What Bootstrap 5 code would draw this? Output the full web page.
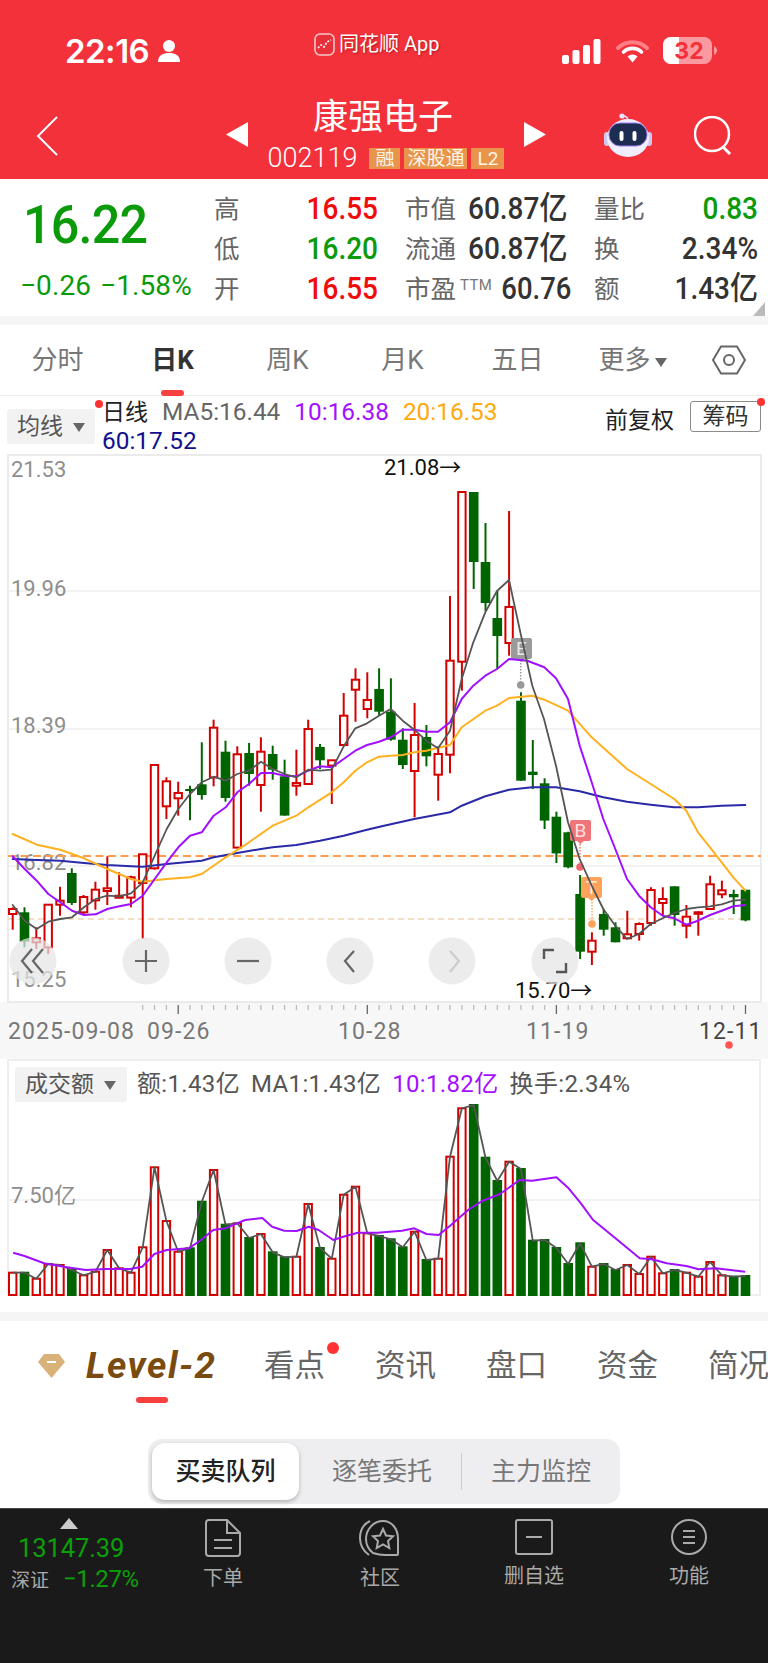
<!DOCTYPE html>
<html lang="zh">
<head>
<meta charset="utf-8">
<title>康强电子</title>
<link href="https://cdn.jsdelivr.net/npm/bootstrap@5.3.0/dist/css/bootstrap.min.css" rel="stylesheet">
<style>
html,body{margin:0;background:#fff}
body{font-family:Roboto,"Noto Sans CJK SC",sans-serif;color:#333}
.app{width:768px;height:1663px;overflow:hidden}
.head{background:#f3313b;height:179px;color:#fff}
.sbar{height:102px;padding-left:65px}
.sb-left{width:249px}
.sb-mid{width:248px;font-size:20px;color:#fff;text-shadow:1px 1px 2px rgba(120,0,0,.5);padding-bottom:14px}
.clock{font-family:Inter,Roboto,sans-serif;font-weight:600;font-size:33px;line-height:36px;letter-spacing:-.5px}
.gap-w{margin-left:15px}
.gap-b{margin-left:14px}
.qnav{height:77px;padding-left:36px}
.backcell{width:190px;margin-top:14px}
.tri-cell{margin-top:20px;width:22px}
.qcenter{width:256px;margin:0 10px;text-align:center;margin-top:-5px}
.qtitle{font-size:35px;line-height:42px;font-weight:400;padding-right:6px}
.qcode{height:23px;margin-top:8px;padding-left:4px}
.qnum{font-size:27px;line-height:23px;font-weight:300;margin-right:12px}
.qtag{background:#e8954b;color:#fff6e8;font-size:19px;line-height:21px;height:21px;padding:0 6px;margin-right:4px}
.qtag.tight{padding:0 3px}
.robot{margin-left:58px;margin-top:11px}
.srch{margin-left:42px;margin-top:14px}
.stats{height:137px;display:grid;grid-template-columns:214px 164px 192px 188px;grid-template-rows:40px 40px 40px;padding-top:10px}
.pricebox{grid-row:1 / span 3}
.bigp{color:#0a9a0a;font-size:54px;font-weight:500;line-height:60px;padding-left:23px;margin-top:6px;width:max-content;transform:scaleX(.93);transform-origin:23px 0;letter-spacing:-.8px}
.subp{color:#0a9a0a;font-size:28px;line-height:32px;padding-left:20px;margin-top:15px;white-space:nowrap;font-weight:400;letter-spacing:.1px}
.subp span{margin-left:9px}
.cell{display:flex;align-items:center;justify-content:space-between;font-size:28px;line-height:40px;white-space:nowrap}
.cell3{padding-left:27px;justify-content:flex-start}
.cell4{padding-left:24px}
.lab{font-size:25.5px;color:#666}
.num{display:inline-block;transform:scaleY(1.14);font-weight:500}
.v-r{color:#ee0c0c}.v-g{color:#0a9a0a}.v-k{color:#333}
.cell3 .v-k{margin-left:12px}
.ttm{font-size:15px;color:#777;margin:-8px 9px 0 4px;letter-spacing:.4px}
.cell3 .ttmv{margin-left:0;font-size:27.5px}
.corner{width:0;height:0;border-style:solid;border-width:0 0 14px 12px;border-color:transparent transparent #bbb transparent;position:absolute;right:3px;bottom:0}
.statwrap{position:relative}
.band{height:9px;background:#f5f5f5}
.ptabs{height:71px;display:grid;grid-template-columns:repeat(6,115px) 78px;border-bottom:1px solid #eee;align-items:center;font-size:26px;color:#777;text-align:center}
.ptab{position:relative}
.ptab.on{color:#333;font-weight:700}
.ptab.on::after{content:"";position:absolute;left:46px;bottom:-16px;width:23px;height:6px;border-radius:3px;background:#f8403f}
.maro{height:58px;padding:0 7px}
.mabtn{width:88px;height:35px;background:#f2f2f2;border-radius:3px;margin-top:13px;font-size:23px;line-height:35px;color:#555;padding-left:10px;position:relative;flex:none}
.caret{display:inline-block;width:0;height:0;border-left:6px solid transparent;border-right:6px solid transparent;border-top:9px solid #666;margin-left:10px;vertical-align:2px}
.reddot{position:absolute;background:#f33;border-radius:50%;width:8px;height:8px}
.matxt{margin-left:7px;font-size:24.4px;line-height:28px;margin-top:2px;color:#666;flex:1;white-space:nowrap}
.matxt span{margin-right:14px}
.matxt .c-k{font-size:23px}
.c-k{color:#222}.c-p{color:#a50fff}.c-o{color:#ffa90f}.c-b{color:#10108f}
.qf{font-size:23px;color:#222;margin-top:8px;margin-right:16px;white-space:nowrap}
.chip{width:71px;height:31px;border:1px solid #8a8a8a;border-radius:3px;font-size:23px;line-height:29px;text-align:center;color:#333;margin-top:5px;position:relative}
svg text{font-family:Roboto,"Noto Sans CJK SC",sans-serif}
.svgblock{display:block}
.vhead{height:35px;margin-top:6px}
.volbox{margin:0 7px;height:237px;border:2px solid #eee;position:relative;padding-left:6px}
.volbox .vg{position:absolute;left:-2px;top:42px}
.vbtn{width:112px;height:35px;background:#f2f2f2;border-radius:3px;font-size:23px;line-height:35px;color:#555;padding-left:10px;flex:none}
.vtxt{font-size:24px;color:#555;white-space:nowrap;margin-left:10px;line-height:35px;letter-spacing:.35px}
.vtxt span{margin-right:11px}
.pgap{height:16px}
.dtabs{height:95px;padding-left:38px;position:relative}
.lvl{font-family:Roboto,sans-serif;font-style:italic;font-weight:700;font-size:37px;color:#7a4b10;margin-left:21px;width:178px;position:relative;line-height:44px;flex:none;letter-spacing:1.5px}
.lvl::after{content:"";position:absolute;left:50px;bottom:-15px;width:32px;height:6px;border-radius:3px;background:#f8403f}
.dt{font-size:30.5px;color:#666;margin-right:50px;line-height:44px;position:relative;white-space:nowrap;flex:none}
.dt i{position:absolute;right:-14px;top:-2px;width:12px;height:12px;border-radius:50%;background:#f33}
.dtrow{height:44px;margin-top:23px;width:800px}
.segwrap{height:69px;padding-left:148px}
.seg{width:472px;height:65px;background:#eeeef0;border-radius:14px;padding:4px}
.sg{width:162px;flex:none;font-size:25px;color:#777;text-align:center;padding-left:4px}
.sg.on{width:147px;padding-left:0;background:#fff;color:#222;border-radius:13px;box-shadow:0 2px 4px rgba(0,0,0,.25);font-weight:500}
.sg.last{width:158px;padding-left:0}
.sgd{width:1px;height:37px;background:#ccc;flex:none}
.botbar{background:#1a1a1a;height:155px;position:relative;border-top:1px solid #444;color:#aaa}
.idx{width:175px;padding-top:9px;position:relative}
.idxup{width:0;height:0;border-left:9px solid transparent;border-right:9px solid transparent;border-bottom:11px solid #ccc;margin-left:60px}
.idxv{color:#0aa00a;font-size:25.5px;line-height:30px;padding-left:18px;margin-top:4px;letter-spacing:-.1px}
.idxl{font-size:19px;line-height:26px;padding-left:11px;margin-top:3px;color:#aaa;white-space:nowrap}
.idxl b{font-weight:400;font-size:24px;color:#0aa00a;margin-left:14px;letter-spacing:-.4px}
.bi{position:absolute;top:10px;text-align:center;font-size:20px;line-height:26px;color:#aaa}
.bi svg{display:block;margin:0 auto 8px}
</style>
</head>
<body>
<div class="app">
 <header class="head">
  <div class="sbar d-flex align-items-center">
   <div class="sb-left d-flex align-items-center">
    <span class="clock">22:16</span>
    <svg class="ms-2" width="24" height="24" viewBox="0 0 24 24"><circle cx="12" cy="7" r="6" fill="#fff"/><path d="M1 23c0-7 5-9 11-9s11 2 11 9z" fill="#fff"/></svg>
   </div>
   <div class="sb-mid d-flex align-items-center">
    <svg width="21" height="23" viewBox="0 0 21 23"><rect x="1" y="1" width="19" height="21" rx="5" fill="#e8303a" stroke="#f8c8c8" stroke-width="1.6"/><path d="M4 15l3-3 3 2 3-5 4-2" fill="none" stroke="#fff" stroke-width="1.6" stroke-dasharray="2 1.5"/></svg>
    <span class="ms-1">同花顺 App</span>
   </div>
   <div class="d-flex align-items-center">
    <svg width="39" height="25" viewBox="0 0 39 25"><rect x="0" y="16" width="7" height="9" rx="2" fill="#fff"/><rect x="10.500" y="11" width="7" height="14" rx="2" fill="#fff"/><rect x="21" y="6" width="7" height="19" rx="2" fill="#fff"/><rect x="31.500" y="0" width="7" height="25" rx="2" fill="#fff"/></svg>
    <svg class="gap-w" width="33" height="25" viewBox="0 0 33 25"><path d="M2 9a21 21 0 0 1 29 0" fill="none" stroke="#ff7f85" stroke-width="4" stroke-linecap="round"/><path d="M7.500 13a13 13 0 0 1 18 0" fill="none" stroke="#fff" stroke-width="3.600" stroke-linecap="round"/><path d="M11.500 17.500a7.500 7.500 0 0 1 10 0l-5 6z" fill="#fff"/></svg>
    <svg class="gap-b" width="55" height="28" viewBox="0 0 55 28"><rect x="0" y="0" width="49" height="27" rx="8" fill="#fa9aa0"/><path d="M8 0h8v27h-8a8 8 0 0 1-8-8v-11a8 8 0 0 1 8-8z" fill="#fff"/><path d="M51 9c2 1 3 3 3 4.500s-1 3.500-3 4.500z" fill="#fa9aa0"/><text x="26" y="21.500" text-anchor="middle" font-size="23" font-weight="700" fill="#f3313b" style="font-family:Inter,sans-serif">32</text></svg>
   </div>
  </div>
  <div class="qnav d-flex align-items-start">
   <div class="backcell"><svg width="22" height="40" viewBox="0 0 22 40" class="d-block"><path d="M21 1L2 20l19 19" fill="none" stroke="#fff" stroke-width="2"/></svg></div>
   <div class="tri-cell"><svg width="22" height="25" viewBox="0 0 22 25" class="d-block"><path d="M22 0v25L0 12.500z" fill="#fff"/></svg></div>
   <div class="qcenter">
    <div class="qtitle">康强电子</div>
    <div class="qcode d-flex align-items-center justify-content-center">
     <span class="qnum">002119</span><span class="qtag">融</span><span class="qtag tight">深股通</span><span class="qtag">L2</span>
    </div>
   </div>
   <div class="tri-cell"><svg width="22" height="25" viewBox="0 0 22 25" class="d-block"><path d="M0 0v25l22-12.500z" fill="#fff"/></svg></div>
   <div class="robot">
    <svg width="48" height="45" viewBox="0 0 48 45" class="d-block">
     <path d="M24 8c0-3-2-5-5-5" fill="none" stroke="#e4e2f8" stroke-width="1.500"/><circle cx="18" cy="3" r="2.600" fill="#e6e4fa"/>
     <rect x="0" y="19" width="6" height="14" rx="3" fill="#cfc9ef"/><rect x="42" y="19" width="6" height="14" rx="3" fill="#cfc9ef"/>
     <ellipse cx="24" cy="25" rx="21" ry="19" fill="#f0eefc"/>
     <rect x="5" y="10" width="38" height="23" rx="11" fill="#1d2d52" stroke="#9c7cf0" stroke-width="1"/>
     <rect x="15.500" y="18" width="4" height="10" rx="2" fill="#fff"/><rect x="28.500" y="18" width="4" height="10" rx="2" fill="#fff"/>
    </svg>
   </div>
   <div class="srch"><svg width="38" height="40" viewBox="0 0 38 40" class="d-block"><circle cx="18" cy="18" r="17" fill="none" stroke="#fff" stroke-width="2.500"/><path d="M29 31l7 7" stroke="#fff" stroke-width="3"/></svg></div>
  </div>
 </header>

 <section class="stats statwrap">
  <div class="pricebox">
   <div class="bigp">16.22</div>
   <div class="subp">−0.26<span>−1.58%</span></div>
  </div>
  <div class="cell"><span class="lab">高</span><span class="num v-r">16.55</span></div>
  <div class="cell cell3"><span class="lab">市值</span><span class="num v-k">60.87亿</span></div>
  <div class="cell cell4"><span class="lab">量比</span><span class="num v-g">0.83</span></div>
  <div class="cell"><span class="lab">低</span><span class="num v-g">16.20</span></div>
  <div class="cell cell3"><span class="lab">流通</span><span class="num v-k">60.87亿</span></div>
  <div class="cell cell4"><span class="lab">换</span><span class="num v-k">2.34%</span></div>
  <div class="cell"><span class="lab">开</span><span class="num v-r">16.55</span></div>
  <div class="cell cell3"><span class="lab">市盈</span><span class="ttm">TTM</span><span class="num v-k ttmv">60.76</span></div>
  <div class="cell cell4"><span class="lab">额</span><span class="num v-k">1.43亿</span></div>
  <span class="corner"></span>
 </section>
 <div class="band"></div>

 <nav class="ptabs">
  <div class="ptab">分时</div>
  <div class="ptab on">日K</div>
  <div class="ptab">周K</div>
  <div class="ptab">月K</div>
  <div class="ptab">五日</div>
  <div class="ptab">更多<span class="caret ms-1"></span></div>
  <div class="d-flex justify-content-center"><svg width="34" height="30" viewBox="0 0 34 30"><path d="M9 1.500h16l8 13.500-8 13.500h-16l-8-13.500z" fill="none" stroke="#666" stroke-width="2"/><circle cx="17" cy="15" r="5" fill="none" stroke="#666" stroke-width="2"/></svg></div>
 </nav>

 <div class="maro d-flex align-items-start">
  <div class="mabtn">均线<span class="caret"></span><span class="reddot" style="right:-8px;top:-9px"></span></div>
  <div class="matxt">
   <div><span class="c-k">日线</span><span>MA5:16.44</span><span class="c-p">10:16.38</span><span class="c-o">20:16.53</span></div>
   <div class="c-b">60:17.52</div>
  </div>
  <div class="qf">前复权</div>
  <div class="chip">筹码<span class="reddot" style="right:-5px;top:-4px"></span></div>
 </div>

 <div id="mainchart"></div>

 <div class="volbox">
  <div class="vhead d-flex align-items-start">
   <div class="vbtn">成交额<span class="caret"></span></div>
   <div class="vtxt"><span>额:1.43亿</span><span>MA1:1.43亿</span><span class="c-p">10:1.82亿</span><span>换手:2.34%</span></div>
  </div>
  <div id="volchart" class="vg"></div>
 </div>
 <div class="pgap"></div>
 <div class="band"></div>

 <div class="dtabs">
  <div class="dtrow d-flex align-items-center">
   <svg class="flex-shrink-0" width="27" height="24" viewBox="0 0 27 24"><path d="M6 0h15l6 8-13.500 16L0 8z" fill="#d9b27a"/><path d="M9 8h9" stroke="#fff" stroke-width="2"/></svg>
   <div class="lvl">Level-2</div>
   <div class="dt">看点<i></i></div><div class="dt">资讯</div><div class="dt">盘口</div><div class="dt">资金</div><div class="dt">简况</div>
  </div>
 </div>
 <div class="segwrap">
  <div class="seg d-flex align-items-stretch">
   <div class="sg on d-flex align-items-center justify-content-center">买卖队列</div>
   <div class="sg d-flex align-items-center justify-content-center">逐笔委托</div>
   <div class="d-flex align-items-center"><div class="sgd"></div></div>
   <div class="sg last d-flex align-items-center justify-content-center">主力监控</div>
  </div>
 </div>

 <footer class="botbar">
  <div class="idx">
   <div class="idxup"></div>
   <div class="idxv">13147.39</div>
   <div class="idxl">深证<b>−1.27%</b></div>
  </div>
  <div class="bi" style="left:198px;width:50px">
   <svg width="36" height="38" viewBox="0 0 36 38"><path d="M4 1h18l13 13v20a3 3 0 0 1-3 3H4a3 3 0 0 1-3-3V4a3 3 0 0 1 3-3z" fill="none" stroke="#aaa" stroke-width="2"/><path d="M22 1v13h13M9 21h18M9 29h18" fill="none" stroke="#aaa" stroke-width="2"/></svg>下单
  </div>
  <div class="bi" style="left:355px;width:50px">
   <svg width="42" height="38" viewBox="0 0 42 38"><path d="M10 36C3 31 1 25 1 19 1 11 5 5 11 2M14 34C9 30 7 25 7 20 7 11 14 2 24 2c9 0 15 8 15 18v15a1 1 0 0 1-1 1H26c-5 0-9-1-12-2z" fill="none" stroke="#aaa" stroke-width="2"/><path d="M24 10l3 6.500 7 .8-5 4.700 1.300 7-6.300-3.500-6.300 3.500 1.300-7-5-4.700 7-.8z" fill="none" stroke="#aaa" stroke-width="2"/></svg>社区
  </div>
  <div class="bi" style="left:504px;width:60px">
   <svg width="38" height="36" viewBox="0 0 38 36"><rect x="1" y="1" width="36" height="34" rx="2" fill="none" stroke="#aaa" stroke-width="2"/><path d="M11 18h16" stroke="#aaa" stroke-width="2"/></svg><div class="mt-2">删自选</div>
  </div>
  <div class="bi" style="left:664px;width:50px">
   <svg width="36" height="36" viewBox="0 0 36 36"><circle cx="18" cy="18" r="17" fill="none" stroke="#aaa" stroke-width="2"/><path d="M12 12h12M12 18h12M12 24h12" stroke="#aaa" stroke-width="2"/></svg><div class="mt-2">功能</div>
  </div>
 </footer>
</div>

<script src="https://cdn.jsdelivr.net/npm/bootstrap@5.3.0/dist/js/bootstrap.bundle.min.js"></script>
<script>
const X=i=>12.7+11.82*i, Y=z=>660+z/3;
const R='#d40000',G='#006400';
const C=[
['r',745,750,765,812],['g',745,760,848,865],['r',805,838,850,870],['r',735,737,865,885],['r',683,725,737,770],['g',628,642,732,738],['r',708,714,760,768],['r',668,692,724,752],['r',592,688,696,738],['r',640,710,716,718],['r',650,655,716,745],['r',585,586,672,840],['r',315,318,628,632],['r',355,367,442,480],['r',368,402,418,470],['g',380,390,396,484],['g',250,376,408,422],['r',182,206,355,382],['g',245,278,417,428],['r',262,286,566,568],['g',252,282,345,380],['r',235,278,378,458],['g',260,285,332,362],['g',302,352,470,470],['r',272,372,380,410],['r',182,210,375,378],['g',255,264,304,330],['r',303,304,320,435],['r',102,170,258,262],['r',28,62,92,188],['r',40,123,150,178],['g',28,90,158,170],
['g',58,158,242,245],['g',208,242,318,330],['r',132,228,336,475],['g',198,234,292,322],['r',262,285,347,425],['r',-189,5,287,343],['r',-501,-501,8,95],['g',-501,-501,-291,-210],['g',-408,-291,-168,-144],['g',-204,-123,-69,30],['r',-444,-156,-48,-10],['g',100,125,365,365],['g',243,338,348,390],['g',358,373,485,510],['g',458,473,583,612],['g',518,520,625,628],['g',648,705,878,900],['r',820,845,878,918],['g',750,765,812,830],['g',790,805,850,850],['r',755,826,838,840],['r',790,795,825,845],['r',685,693,792,800],['r',685,720,732,770],['g',682,682,768,800],['r',738,773,800,838],['r',757,760,763,830],['r',650,676,750,752],['r',665,694,706,718],['g',692,705,715,765],['g',692,692,784,787]];
const z3=a=>a.map(p=>(p[0]/3).toFixed(1)+','+Y(p[1]).toFixed(1));
const z4=a=>a.map(p=>(384+p[0]/3).toFixed(1)+','+Y(p[1]).toFixed(1));
const MA5=z3([[38,738],[74,785],[110,810],[145,788],[181,780],[216,775],[252,745],[287,720],[322,710],[358,712],[393,703],[428,670],[464,590],[500,510],[535,450],[570,405],[605,370],[641,353],[677,365],[712,345],[747,335],[783,308],[818,330],[854,345],[889,355],[925,332],[960,335],[995,332],[1031,262],[1066,208],[1101,193],[1137,170]]).concat(z4([[20,150],[56,185],[91,212],[127,245],[162,268],[198,215],[233,60],[268,-50],[304,-140],[339,-204],[375,-237],[410,-75],[445,80],[480,180],[516,320],[552,490],[587,600],[623,680],[658,750],[694,800],[729,840],[765,825],[800,795],[836,778],[871,762],[907,750],[942,745],[978,742],[1013,736],[1048,725],[1084,722]]));
const MA10=z3([[38,592],[74,630],[110,665],[145,705],[181,730],[216,755],[252,768],[287,766],[322,750],[358,742],[393,735],[428,710],[464,660],[500,610],[535,565],[570,530],[605,520],[641,470],[677,445],[712,400],[747,375],[783,342],[818,342],[854,350],[889,352],[925,335],[960,322],[995,325],[1031,300],[1066,275],[1101,258],[1137,248]]).concat(z4([[20,235],[56,212],[91,212],[127,218],[162,218],[198,190],[233,120],[268,80],[304,50],[339,30],[375,0],[430,5],[481,25],[516,58],[552,120],[587,260],[623,370],[658,480],[694,570],[729,660],[765,710],[800,745],[836,770],[871,778],[907,797],[942,785],[978,768],[1013,755],[1048,742],[1084,738]]));
const MA20=z3([[38,525],[110,557],[181,572],[252,598],[322,630],[393,660],[428,668],[500,660],[570,655],[605,645],[677,595],[747,550],[818,500],[889,470],[925,445],[995,400],[1031,370],[1066,335],[1101,310],[1137,293]]).concat(z4([[20,290],[56,288],[91,280],[127,275],[198,258],[233,205],[304,155],[339,140],[375,117],[445,110],[481,122],[552,155],[623,235],[729,330],[800,375],[871,420],[907,455],[942,520],[978,565],[1013,610],[1048,655],[1084,695]]));
const MA60=z3([[38,600],[110,603],[181,605],[252,612],[322,618],[393,622],[428,623],[500,615],[605,605],[641,595],[712,582],[783,570],[818,565],[889,558],[960,545],[1031,530],[1101,512],[1152,500]]).concat(z4([[91,480],[198,460],[233,440],[304,412],[375,392],[445,385],[516,385],[587,397],[658,415],[729,428],[800,437],[871,445],[942,445],[1013,440],[1084,438]]));
const OY=455;
let s='';
const T=(x,y,t,o='')=>`<text x="${x}" y="${y-OY}" ${o}>${t}</text>`;
const Ln=(x1,y1,x2,y2,o)=>`<line x1="${x1}" y1="${y1-OY}" x2="${x2}" y2="${y2-OY}" ${o}/>`;
const PL=(p,c,w)=>`<polyline points="${p.map(q=>{const[a,b]=q.split(',');return a+','+(b-OY).toFixed(1)}).join(' ')}" fill="none" stroke="${c}" stroke-width="${w}" stroke-linejoin="round" stroke-linecap="round"/>`;
s+=`<rect x="0" y="${1003-OY}" width="768" height="57" fill="#f7f7f7"/>`;
s+=`<rect x="8" y="1" width="753" height="547" fill="#fff" stroke="#ebebeb" stroke-width="2"/>`;
[592,730,867].forEach(y=>s+=Ln(8,y,760,y,'stroke="#eeeeee" stroke-width="1.5"'));
const lab='font-size="22" fill="#8e8e8e"';
s+=T(11,478,'21.53',lab)+T(11,597,'19.96',lab)+T(11,734,'18.39',lab)+T(11,871,'16.82',lab)+T(11,988,'15.25',lab);
s+=Ln(8,857,761,857,'stroke="#ff9c50" stroke-width="2" stroke-dasharray="8 4.500"');
s+=Ln(8,920,746,920,'stroke="#efd5b4" stroke-width="1.300" stroke-dasharray="6 4"');
const tag=(x,y,c,t)=>`<path d="M${x+2} ${y-OY}h17a2 2 0 0 1 2 2v17a2 2 0 0 1-2 2h-5l-3.500 3-3.500-3h-5a2 2 0 0 1-2-2v-17a2 2 0 0 1 2-2z" fill="${c}"/><text x="${x+10.500}" y="${y-OY+17}" text-anchor="middle" font-size="19" fill="#fff" fill-opacity=".8">${t}</text>`;
s+=Ln(520.7,658,520.7,684,'stroke="#999" stroke-width="1.500" stroke-dasharray="1.500 1.500"')+`<circle cx="520.700" cy="${686-OY}" r="3.800" fill="#999"/>`;
s+=Ln(580,842,580,866,'stroke="#f0767a" stroke-width="1.500" stroke-dasharray="1.500 1.500"')+`<circle cx="580" cy="${868-OY}" r="3.800" fill="#ef6468"/>`;
s+=Ln(592,900,592,923,'stroke="#ffab66" stroke-width="1.500" stroke-dasharray="1.500 1.500"')+`<circle cx="592" cy="${925-OY}" r="3.800" fill="#ffa35c"/>`;
C.forEach((c,i)=>{const x=X(i),col=c[0]=='r'?R:G;
 s+=Ln(x.toFixed(1),Y(c[1]).toFixed(1),x.toFixed(1),Y(c[4]).toFixed(1),`stroke="${col}" stroke-width="2"`);
 const y=Y(c[2])-OY,h=Math.max(Y(c[3])-Y(c[2]),1.5);
 if(c[0]=='r')s+=`<rect x="${(x-3.700).toFixed(1)}" y="${y.toFixed(1)}" width="7.400" height="${h.toFixed(1)}" fill="#fff" stroke="${R}" stroke-width="2"/>`;
 else s+=`<rect x="${(x-4.800).toFixed(1)}" y="${y.toFixed(1)}" width="9.600" height="${h.toFixed(1)}" fill="${G}"/>`;
});
s+=tag(511,639,'#9a9a9a','E')+tag(570,821,'#f0757a','B')+tag(581,878,'#ffa35c','T');
s+=PL(MA60,'#2a2aa8',2)+PL(MA20,'#ffb01e',2)+PL(MA10,'#a010ff',2)+PL(MA5,'#555',1.800);
const arrow='font-size="22" fill="#111"';
s+=T(384,476,'21.08→',arrow)+T(515,999,'15.70→',arrow);
[33,146,248,350,452,555].forEach(x=>{s+=`<circle cx="${x}" cy="${962-OY}" r="23.500" fill="#e4e4e4" fill-opacity=".72"/>`});
const cy=962-OY,ic='fill="none" stroke="#666" stroke-width="2.200"';
s+=`<path d="M32 ${cy-12}l-10 12 10 12M43 ${cy-12}l-10 12 10 12" ${ic}/>`;
s+=`<path d="M135 ${cy}h22M146 ${cy-11}v22" ${ic}/><path d="M237 ${cy}h22" ${ic}/>`;
s+=`<path d="M354 ${cy-10}l-9 10 9 11" ${ic}/><path d="M450 ${cy-10}l9 10-9 11" fill="none" stroke="#ccc" stroke-width="2.200"/>`;
s+=`<path d="M544 ${cy-2}v-9h10M566 ${cy+2}v9h-10" fill="none" stroke="#555" stroke-width="2.400"/>`;
for(let i=11;i<=62;i++){const x=X(i).toFixed(1),maj=[14,30,46,62].includes(i);
 s+=Ln(x,1006,x,maj?1015:1011,`stroke="${maj?'#666':'#bbb'}" stroke-width="1.300"`);}
const dl='font-size="23" fill="#777" letter-spacing="1.1"';
s+=T(8,1040,'2025-09-08',dl)+T(147,1040,'09-26',dl)+T(338,1040,'10-28',dl)+T(526,1040,'11-19',dl)+T(699,1040,'12-11','font-size="23" fill="#444" letter-spacing="1.1"');
s+=`<circle cx="729" cy="${1046-OY}" r="3.800" fill="#f55"/>`;
document.getElementById('mainchart').innerHTML=`<svg class="svgblock" width="768" height="605" viewBox="0 0 768 605">${s}</svg>`;

const VT=[668,668,686,642,645,660,676,665,600,655,668,592,352,513,605,595,455,360,524,520,564,552,607,622,620,462,594,626,434,410,550,558,568,592,545,630,626,320,175,165,323,393,335,357,572,570,594,642,580,650,642,660,645,672,620,670,660,668,680,636,676,680,678];
const VY=z=>1050+z/3-1103, VX=x=>x-7;
let v='';
v+=`<line x1="0" x2="752" y1="${1200-1103}" y2="${1200-1103}" stroke="#eee" stroke-width="1.500"/>`;
v+=`<text x="4" y="${1203-1103}" font-size="22" fill="#8e8e8e">7.50亿</text>`;
const base=VY(735);
VT.forEach((t,i)=>{const x=VX(X(i)),col=C[i][0];const y=VY(t);
 if(col=='r')v+=`<rect x="${(x-3.700).toFixed(1)}" y="${y.toFixed(1)}" width="7.400" height="${(base-y).toFixed(1)}" fill="#fff" stroke="${R}" stroke-width="2"/>`;
 else v+=`<rect x="${(x-4.800).toFixed(1)}" y="${(y-1).toFixed(1)}" width="9.600" height="${(base-y+2).toFixed(1)}" fill="${G}"/>`;});
v+=`<polyline points="${VT.map((t,i)=>VX(X(i)).toFixed(1)+','+VY(t).toFixed(1)).join(' ')}" fill="none" stroke="#555" stroke-width="1.800" stroke-linejoin="round"/>`;
const VM=[[27,608],[50,618],[90,640],[130,650],[175,660],[215,657],[265,657],[290,650],[315,612],[340,600],[385,595],[410,570],[435,540],[460,535],[500,510],[535,504],[555,530],[580,542],[605,543],[630,530],[650,540],[680,570],[700,560],[730,548],[770,548],[820,542],[845,535],[870,552],[895,555],[920,525],[955,480],[985,452],[1020,432],[1060,390],[1085,392],[1135,382],[1160,415],[1185,460],[1210,510],[1235,540],[1260,570],[1305,625],[1330,628],[1360,640],[1400,648],[1425,658],[1460,655],[1520,665]];
v+=`<polyline points="${VM.map(p=>VX(p[0]/2.04).toFixed(1)+','+VY(p[1]).toFixed(1)).join(' ')}" fill="none" stroke="#a010ff" stroke-width="2" stroke-linejoin="round"/>`;
document.getElementById('volchart').innerHTML=`<svg class="svgblock" width="754" height="200" viewBox="0 0 754 200">${v}</svg>`;
</script>
</body>
</html>
